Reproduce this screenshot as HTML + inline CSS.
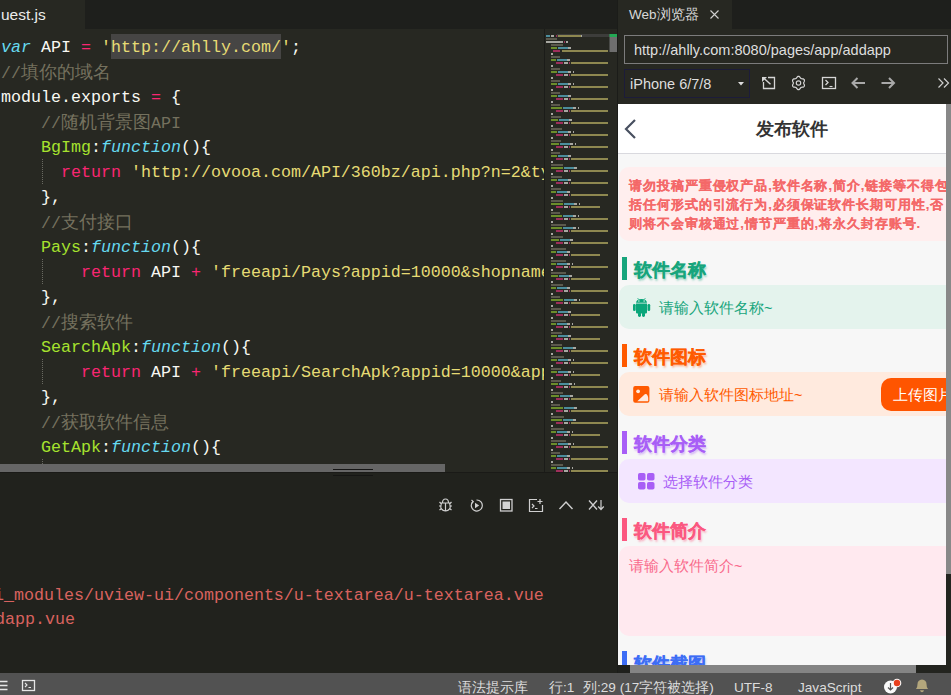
<!DOCTYPE html>
<html><head><meta charset="utf-8">
<style>
*{margin:0;padding:0;box-sizing:border-box}
html,body{width:951px;height:695px;overflow:hidden;background:#272822;font-family:"Liberation Sans",sans-serif}
.abs{position:absolute}
/* editor */
#tabbar{position:absolute;left:0;top:0;width:617px;height:29px;background:#1e1f1c}
#tab{position:absolute;left:0;top:0;width:85px;height:29px;background:#272822;color:#ececec;font-size:15.5px;line-height:29px;padding-left:0}
#code{position:absolute;left:0;top:29px;width:544px;height:435px;background:#272822;overflow:hidden}
#codein{position:absolute;left:0;top:-29px;width:544px;height:500px}
.ln{position:absolute;left:1px;height:25px;line-height:25px;white-space:pre;font-family:"Liberation Mono",monospace;font-size:16.67px;color:#f8f8f2}
.cj{font-style:normal;font-family:"Liberation Sans",sans-serif;font-size:18px;letter-spacing:0}
.w{color:#f8f8f2}.b{color:#66d9ef;font-style:italic}.p{color:#f92672}.y{color:#e6db74}.g{color:#a6e22e}.c{color:#75715e}
.sel{background:#49483e;display:inline-block;height:24px;line-height:25px}
.guide{position:absolute;left:42px;width:1px;height:25px;background:repeating-linear-gradient(#6a6a62 0 1px,transparent 1px 2px)}
#minimap{position:absolute;left:544px;top:29px;width:73px;height:443px;background:#272822;border-left:1px solid #1b1c19}
#hscroll{position:absolute;left:0;top:464px;width:544px;height:8px;background:#272822}
#hthumb{position:absolute;left:0;top:464px;width:445px;height:8px;background:#666}
/* console */
#console{position:absolute;left:0;top:472px;width:617px;height:201px;background:#21221d;border-top:1px solid #1a1a17}
.ct{position:absolute;white-space:pre;font-family:"Liberation Mono",monospace;font-size:16.67px;color:#d9625f}
/* status */
#status{position:absolute;left:0;top:673px;width:951px;height:22px;background:#525252;color:#dcdcdc;font-size:13.6px}
#status span{position:absolute;top:4px;line-height:22px;white-space:nowrap}
/* browser */
#bsep{position:absolute;left:617px;top:0;width:1px;height:673px;background:#1b1c19}
#btabbar{position:absolute;left:618px;top:0;width:333px;height:29px;background:#1e1f1c}
#btab{position:absolute;left:618px;top:0;width:114px;height:29px;background:#272822;color:#d8d8d8;font-size:13.5px;line-height:29px}
#btool{position:absolute;left:618px;top:29px;width:333px;height:75px;background:#272822}
#url{position:absolute;left:624px;top:35px;width:324px;height:29px;border:1px solid #7c7c7c;color:#dedede;font-size:14.5px;line-height:29px;padding-left:9px;white-space:nowrap}
#dev{position:absolute;left:624px;top:69px;width:126px;height:29px;border:1px solid #1c1c3a;color:#dedede;font-size:14.5px;line-height:29px;padding-left:5px}
#web{position:absolute;left:618px;top:104px;width:328px;height:561px;background:#f7f7f7;overflow:hidden}
#vscroll{position:absolute;left:946px;top:104px;width:5px;height:561px;background:#23241f}
#vthumb{position:absolute;left:946px;top:104px;width:5px;height:470px;background:#888}
#hs2{position:absolute;left:618px;top:665px;width:333px;height:8px;background:#23241f}
#hs2t{position:absolute;left:630px;top:665px;width:286px;height:8px;background:#848484}
#hs2l{position:absolute;left:618px;top:665px;width:12px;height:8px;background:#1f201c}
.wabs{position:absolute;white-space:nowrap}
.bar{position:absolute;left:4px;width:5px;height:23px}
.stitle{position:absolute;left:16px;margin-top:1.5px;font-size:18.3px;font-weight:bold;line-height:24px;-webkit-text-stroke:.2px currentColor}
.box{position:absolute;left:1px;width:400px;height:44px;border-radius:10px}
.ph{position:absolute;font-size:14.5px;line-height:20px;white-space:nowrap}
</style></head><body>
<!-- editor -->
<div id="tabbar"></div>
<div id="tab"><span style="position:absolute;left:1px;top:0">uest.js</span></div>
<div id="code"><div id="codein">
<div class="abs" style="left:111px;top:34px;width:170px;height:25px;background:#464544"></div><div class="guide" style="top:159px"></div><div class="guide" style="top:259px"></div><div class="guide" style="top:359px"></div><div class="guide" style="top:459px"></div><div class="ln" style="top:35px"><span class="b">var</span><span class="w"> API </span><span class="p">=</span><span class="w"> </span><span class="y">&#x27;</span><span class="y">http://ahlly.com/</span><span class="y">&#x27;</span><span class="w">;</span></div>
<div class="ln" style="top:60px"><span class="c">//<i class="cj">填你的域名</i></span></div>
<div class="ln" style="top:85px"><span class="w">module.exports </span><span class="p">=</span><span class="w"> {</span></div>
<div class="ln" style="top:110px"><span class="c">    //<i class="cj">随机背景图</i>API</span></div>
<div class="ln" style="top:135px"><span class="w">    </span><span class="g">BgImg</span><span class="w">:</span><span class="b">function</span><span class="w">(){</span></div>
<div class="ln" style="top:160px"><span class="w">      </span><span class="p">return</span><span class="w"> </span><span class="y">&#x27;http://ovooa.com/API/360bz/api.php?n=2&amp;type=json&#x27;</span></div>
<div class="ln" style="top:185px"><span class="w">    },</span></div>
<div class="ln" style="top:210px"><span class="c">    //<i class="cj">支付接口</i></span></div>
<div class="ln" style="top:235px"><span class="w">    </span><span class="g">Pays</span><span class="w">:</span><span class="b">function</span><span class="w">(){</span></div>
<div class="ln" style="top:260px"><span class="w">        </span><span class="p">return</span><span class="w"> API </span><span class="p">+</span><span class="w"> </span><span class="y">&#x27;freeapi/Pays?appid=10000&amp;shopname=xxx&#x27;</span></div>
<div class="ln" style="top:285px"><span class="w">    },</span></div>
<div class="ln" style="top:310px"><span class="c">    //<i class="cj">搜索软件</i></span></div>
<div class="ln" style="top:335px"><span class="w">    </span><span class="g">SearchApk</span><span class="w">:</span><span class="b">function</span><span class="w">(){</span></div>
<div class="ln" style="top:360px"><span class="w">        </span><span class="p">return</span><span class="w"> API </span><span class="p">+</span><span class="w"> </span><span class="y">&#x27;freeapi/SearchApk?appid=10000&amp;apptype=xx&#x27;</span></div>
<div class="ln" style="top:385px"><span class="w">    },</span></div>
<div class="ln" style="top:410px"><span class="c">    //<i class="cj">获取软件信息</i></span></div>
<div class="ln" style="top:435px"><span class="w">    </span><span class="g">GetApk</span><span class="w">:</span><span class="b">function</span><span class="w">(){</span></div>
<div class="ln" style="top:460px"><span class="w">        </span><span class="p">return</span><span class="w"> API </span><span class="p">+</span><span class="w"> </span><span class="y">&#x27;freeapi/GetApk?appid=10000&#x27;</span></div>
</div></div>
<svg class="abs" style="left:0;top:0" width="951" height="695" viewBox="0 0 951 695">
<rect x="544" y="29" width="73" height="443" fill="#272822"/>
<rect x="544" y="29" width="1" height="443" fill="#1b1c19"/>
<rect x="557" y="34" width="52" height="3" fill="#3d3d3b"/><rect x="546" y="35" width="4" height="2" fill="#4c8d9c"/><rect x="551" y="35" width="3" height="2" fill="#a8a8a2"/><rect x="556" y="35" width="1" height="2" fill="#9e2f5b"/><rect x="558" y="35" width="23" height="2" fill="#8e8850"/><rect x="581" y="35" width="1" height="2" fill="#a8a8a2"/><rect x="546" y="38" width="11" height="2" fill="#5c5a4d"/><rect x="546" y="41" width="17" height="2" fill="#a8a8a2"/><rect x="564" y="41" width="1" height="2" fill="#9e2f5b"/><rect x="566" y="41" width="2" height="2" fill="#a8a8a2"/><rect x="551" y="44" width="12" height="2" fill="#5c5a4d"/><rect x="551" y="47" width="6" height="2" fill="#6b8d2b"/><rect x="558" y="47" width="10" height="2" fill="#4c8d9c"/><rect x="568" y="47" width="3" height="2" fill="#a8a8a2"/><rect x="553" y="50" width="7" height="2" fill="#9e2f5b"/><rect x="562" y="50" width="46" height="2" fill="#8e8850"/><rect x="551" y="53" width="2" height="2" fill="#a8a8a2"/><rect x="551" y="56" width="9" height="2" fill="#5c5a4d"/><rect x="551" y="59" width="5" height="2" fill="#6b8d2b"/><rect x="557" y="59" width="10" height="2" fill="#4c8d9c"/><rect x="567" y="59" width="3" height="2" fill="#a8a8a2"/><rect x="556" y="62" width="7" height="2" fill="#9e2f5b"/><rect x="564" y="62" width="4" height="2" fill="#a8a8a2"/><rect x="569" y="62" width="1" height="2" fill="#9e2f5b"/><rect x="571" y="62" width="37" height="2" fill="#8e8850"/><rect x="551" y="65" width="2" height="2" fill="#a8a8a2"/><rect x="551" y="68" width="9" height="2" fill="#5c5a4d"/><rect x="551" y="71" width="6" height="2" fill="#6b8d2b"/><rect x="558" y="71" width="10" height="2" fill="#4c8d9c"/><rect x="568" y="71" width="3" height="2" fill="#a8a8a2"/><rect x="573" y="71" width="1" height="2" fill="#a8a8a2"/><rect x="556" y="74" width="7" height="2" fill="#9e2f5b"/><rect x="564" y="74" width="4" height="2" fill="#a8a8a2"/><rect x="569" y="74" width="1" height="2" fill="#9e2f5b"/><rect x="571" y="74" width="37" height="2" fill="#8e8850"/><rect x="551" y="77" width="2" height="2" fill="#a8a8a2"/><rect x="551" y="80" width="9" height="2" fill="#5c5a4d"/><rect x="551" y="83" width="6" height="2" fill="#6b8d2b"/><rect x="558" y="83" width="10" height="2" fill="#4c8d9c"/><rect x="568" y="83" width="3" height="2" fill="#a8a8a2"/><rect x="573" y="83" width="1" height="2" fill="#a8a8a2"/><rect x="556" y="86" width="7" height="2" fill="#9e2f5b"/><rect x="564" y="86" width="4" height="2" fill="#a8a8a2"/><rect x="569" y="86" width="1" height="2" fill="#9e2f5b"/><rect x="571" y="86" width="37" height="2" fill="#8e8850"/><rect x="551" y="89" width="2" height="2" fill="#a8a8a2"/><rect x="551" y="92" width="9" height="2" fill="#5c5a4d"/><rect x="551" y="95" width="6" height="2" fill="#6b8d2b"/><rect x="558" y="95" width="10" height="2" fill="#4c8d9c"/><rect x="568" y="95" width="3" height="2" fill="#a8a8a2"/><rect x="556" y="98" width="7" height="2" fill="#9e2f5b"/><rect x="564" y="98" width="4" height="2" fill="#a8a8a2"/><rect x="569" y="98" width="1" height="2" fill="#9e2f5b"/><rect x="571" y="98" width="37" height="2" fill="#8e8850"/><rect x="551" y="101" width="2" height="2" fill="#a8a8a2"/><rect x="551" y="104" width="9" height="2" fill="#5c5a4d"/><rect x="551" y="107" width="11" height="2" fill="#6b8d2b"/><rect x="563" y="107" width="10" height="2" fill="#4c8d9c"/><rect x="573" y="107" width="3" height="2" fill="#a8a8a2"/><rect x="578" y="107" width="1" height="2" fill="#a8a8a2"/><rect x="556" y="110" width="7" height="2" fill="#9e2f5b"/><rect x="564" y="110" width="4" height="2" fill="#a8a8a2"/><rect x="569" y="110" width="1" height="2" fill="#9e2f5b"/><rect x="571" y="110" width="37" height="2" fill="#8e8850"/><rect x="551" y="113" width="2" height="2" fill="#a8a8a2"/><rect x="551" y="116" width="10" height="2" fill="#5c5a4d"/><rect x="551" y="119" width="7" height="2" fill="#6b8d2b"/><rect x="559" y="119" width="10" height="2" fill="#4c8d9c"/><rect x="569" y="119" width="3" height="2" fill="#a8a8a2"/><rect x="556" y="122" width="7" height="2" fill="#9e2f5b"/><rect x="564" y="122" width="4" height="2" fill="#a8a8a2"/><rect x="569" y="122" width="1" height="2" fill="#9e2f5b"/><rect x="571" y="122" width="37" height="2" fill="#8e8850"/><rect x="551" y="125" width="2" height="2" fill="#a8a8a2"/><rect x="551" y="128" width="11" height="2" fill="#5c5a4d"/><rect x="551" y="131" width="6" height="2" fill="#6b8d2b"/><rect x="558" y="131" width="10" height="2" fill="#4c8d9c"/><rect x="568" y="131" width="3" height="2" fill="#a8a8a2"/><rect x="573" y="131" width="1" height="2" fill="#a8a8a2"/><rect x="556" y="134" width="7" height="2" fill="#9e2f5b"/><rect x="564" y="134" width="4" height="2" fill="#a8a8a2"/><rect x="569" y="134" width="1" height="2" fill="#9e2f5b"/><rect x="571" y="134" width="37" height="2" fill="#8e8850"/><rect x="551" y="137" width="2" height="2" fill="#a8a8a2"/><rect x="551" y="140" width="10" height="2" fill="#5c5a4d"/><rect x="551" y="143" width="8" height="2" fill="#6b8d2b"/><rect x="560" y="143" width="10" height="2" fill="#4c8d9c"/><rect x="570" y="143" width="3" height="2" fill="#a8a8a2"/><rect x="575" y="143" width="1" height="2" fill="#a8a8a2"/><rect x="556" y="146" width="7" height="2" fill="#9e2f5b"/><rect x="564" y="146" width="4" height="2" fill="#a8a8a2"/><rect x="569" y="146" width="1" height="2" fill="#9e2f5b"/><rect x="571" y="146" width="37" height="2" fill="#8e8850"/><rect x="551" y="149" width="2" height="2" fill="#a8a8a2"/><rect x="551" y="152" width="9" height="2" fill="#5c5a4d"/><rect x="551" y="155" width="6" height="2" fill="#6b8d2b"/><rect x="558" y="155" width="10" height="2" fill="#4c8d9c"/><rect x="568" y="155" width="3" height="2" fill="#a8a8a2"/><rect x="556" y="158" width="7" height="2" fill="#9e2f5b"/><rect x="564" y="158" width="4" height="2" fill="#a8a8a2"/><rect x="569" y="158" width="1" height="2" fill="#9e2f5b"/><rect x="571" y="158" width="37" height="2" fill="#8e8850"/><rect x="551" y="161" width="2" height="2" fill="#a8a8a2"/><rect x="551" y="164" width="12" height="2" fill="#5c5a4d"/><rect x="551" y="167" width="12" height="2" fill="#6b8d2b"/><rect x="564" y="167" width="10" height="2" fill="#4c8d9c"/><rect x="574" y="167" width="3" height="2" fill="#a8a8a2"/><rect x="556" y="170" width="7" height="2" fill="#9e2f5b"/><rect x="564" y="170" width="4" height="2" fill="#a8a8a2"/><rect x="569" y="170" width="1" height="2" fill="#9e2f5b"/><rect x="571" y="170" width="37" height="2" fill="#8e8850"/><rect x="551" y="173" width="2" height="2" fill="#a8a8a2"/><rect x="551" y="176" width="11" height="2" fill="#5c5a4d"/><rect x="551" y="179" width="6" height="2" fill="#6b8d2b"/><rect x="558" y="179" width="10" height="2" fill="#4c8d9c"/><rect x="568" y="179" width="3" height="2" fill="#a8a8a2"/><rect x="556" y="182" width="7" height="2" fill="#9e2f5b"/><rect x="564" y="182" width="4" height="2" fill="#a8a8a2"/><rect x="569" y="182" width="1" height="2" fill="#9e2f5b"/><rect x="571" y="182" width="37" height="2" fill="#8e8850"/><rect x="551" y="185" width="2" height="2" fill="#a8a8a2"/><rect x="551" y="188" width="10" height="2" fill="#5c5a4d"/><rect x="551" y="191" width="5" height="2" fill="#6b8d2b"/><rect x="557" y="191" width="10" height="2" fill="#4c8d9c"/><rect x="567" y="191" width="3" height="2" fill="#a8a8a2"/><rect x="556" y="194" width="7" height="2" fill="#9e2f5b"/><rect x="564" y="194" width="4" height="2" fill="#a8a8a2"/><rect x="569" y="194" width="1" height="2" fill="#9e2f5b"/><rect x="571" y="194" width="37" height="2" fill="#8e8850"/><rect x="551" y="197" width="2" height="2" fill="#a8a8a2"/><rect x="551" y="200" width="12" height="2" fill="#5c5a4d"/><rect x="551" y="203" width="12" height="2" fill="#6b8d2b"/><rect x="564" y="203" width="10" height="2" fill="#4c8d9c"/><rect x="574" y="203" width="3" height="2" fill="#a8a8a2"/><rect x="579" y="203" width="1" height="2" fill="#a8a8a2"/><rect x="556" y="206" width="7" height="2" fill="#9e2f5b"/><rect x="564" y="206" width="4" height="2" fill="#a8a8a2"/><rect x="569" y="206" width="1" height="2" fill="#9e2f5b"/><rect x="571" y="206" width="29" height="2" fill="#8e8850"/><rect x="551" y="209" width="2" height="2" fill="#a8a8a2"/><rect x="551" y="212" width="9" height="2" fill="#5c5a4d"/><rect x="551" y="215" width="11" height="2" fill="#6b8d2b"/><rect x="563" y="215" width="10" height="2" fill="#4c8d9c"/><rect x="573" y="215" width="3" height="2" fill="#a8a8a2"/><rect x="578" y="215" width="1" height="2" fill="#a8a8a2"/><rect x="556" y="218" width="7" height="2" fill="#9e2f5b"/><rect x="564" y="218" width="4" height="2" fill="#a8a8a2"/><rect x="569" y="218" width="1" height="2" fill="#9e2f5b"/><rect x="571" y="218" width="37" height="2" fill="#8e8850"/><rect x="551" y="221" width="2" height="2" fill="#a8a8a2"/><rect x="551" y="224" width="15" height="2" fill="#5c5a4d"/><rect x="551" y="227" width="11" height="2" fill="#6b8d2b"/><rect x="563" y="227" width="10" height="2" fill="#4c8d9c"/><rect x="573" y="227" width="3" height="2" fill="#a8a8a2"/><rect x="578" y="227" width="1" height="2" fill="#a8a8a2"/><rect x="556" y="230" width="7" height="2" fill="#9e2f5b"/><rect x="564" y="230" width="4" height="2" fill="#a8a8a2"/><rect x="569" y="230" width="1" height="2" fill="#9e2f5b"/><rect x="571" y="230" width="37" height="2" fill="#8e8850"/><rect x="551" y="233" width="2" height="2" fill="#a8a8a2"/><rect x="551" y="236" width="12" height="2" fill="#5c5a4d"/><rect x="551" y="239" width="8" height="2" fill="#6b8d2b"/><rect x="560" y="239" width="10" height="2" fill="#4c8d9c"/><rect x="570" y="239" width="3" height="2" fill="#a8a8a2"/><rect x="556" y="242" width="7" height="2" fill="#9e2f5b"/><rect x="564" y="242" width="4" height="2" fill="#a8a8a2"/><rect x="569" y="242" width="1" height="2" fill="#9e2f5b"/><rect x="571" y="242" width="37" height="2" fill="#8e8850"/><rect x="551" y="245" width="2" height="2" fill="#a8a8a2"/><rect x="551" y="248" width="15" height="2" fill="#5c5a4d"/><rect x="551" y="251" width="5" height="2" fill="#6b8d2b"/><rect x="557" y="251" width="10" height="2" fill="#4c8d9c"/><rect x="567" y="251" width="3" height="2" fill="#a8a8a2"/><rect x="556" y="254" width="7" height="2" fill="#9e2f5b"/><rect x="564" y="254" width="4" height="2" fill="#a8a8a2"/><rect x="569" y="254" width="1" height="2" fill="#9e2f5b"/><rect x="571" y="254" width="29" height="2" fill="#8e8850"/><rect x="551" y="257" width="2" height="2" fill="#a8a8a2"/><rect x="551" y="260" width="15" height="2" fill="#5c5a4d"/><rect x="551" y="263" width="5" height="2" fill="#6b8d2b"/><rect x="557" y="263" width="10" height="2" fill="#4c8d9c"/><rect x="567" y="263" width="3" height="2" fill="#a8a8a2"/><rect x="572" y="263" width="1" height="2" fill="#a8a8a2"/><rect x="556" y="266" width="7" height="2" fill="#9e2f5b"/><rect x="564" y="266" width="4" height="2" fill="#a8a8a2"/><rect x="569" y="266" width="1" height="2" fill="#9e2f5b"/><rect x="571" y="266" width="37" height="2" fill="#8e8850"/><rect x="551" y="269" width="2" height="2" fill="#a8a8a2"/><rect x="551" y="272" width="15" height="2" fill="#5c5a4d"/><rect x="551" y="275" width="7" height="2" fill="#6b8d2b"/><rect x="559" y="275" width="10" height="2" fill="#4c8d9c"/><rect x="569" y="275" width="3" height="2" fill="#a8a8a2"/><rect x="556" y="278" width="7" height="2" fill="#9e2f5b"/><rect x="564" y="278" width="4" height="2" fill="#a8a8a2"/><rect x="569" y="278" width="1" height="2" fill="#9e2f5b"/><rect x="571" y="278" width="29" height="2" fill="#8e8850"/><rect x="551" y="281" width="2" height="2" fill="#a8a8a2"/><rect x="551" y="284" width="12" height="2" fill="#5c5a4d"/><rect x="551" y="287" width="5" height="2" fill="#6b8d2b"/><rect x="557" y="287" width="10" height="2" fill="#4c8d9c"/><rect x="567" y="287" width="3" height="2" fill="#a8a8a2"/><rect x="556" y="290" width="7" height="2" fill="#9e2f5b"/><rect x="564" y="290" width="4" height="2" fill="#a8a8a2"/><rect x="569" y="290" width="1" height="2" fill="#9e2f5b"/><rect x="571" y="290" width="37" height="2" fill="#8e8850"/><rect x="551" y="293" width="2" height="2" fill="#a8a8a2"/><rect x="551" y="296" width="9" height="2" fill="#5c5a4d"/><rect x="551" y="299" width="12" height="2" fill="#6b8d2b"/><rect x="564" y="299" width="10" height="2" fill="#4c8d9c"/><rect x="574" y="299" width="3" height="2" fill="#a8a8a2"/><rect x="579" y="299" width="1" height="2" fill="#a8a8a2"/><rect x="556" y="302" width="7" height="2" fill="#9e2f5b"/><rect x="564" y="302" width="4" height="2" fill="#a8a8a2"/><rect x="569" y="302" width="1" height="2" fill="#9e2f5b"/><rect x="571" y="302" width="37" height="2" fill="#8e8850"/><rect x="551" y="305" width="2" height="2" fill="#a8a8a2"/><rect x="551" y="308" width="10" height="2" fill="#5c5a4d"/><rect x="551" y="311" width="6" height="2" fill="#6b8d2b"/><rect x="558" y="311" width="10" height="2" fill="#4c8d9c"/><rect x="568" y="311" width="3" height="2" fill="#a8a8a2"/><rect x="556" y="314" width="7" height="2" fill="#9e2f5b"/><rect x="564" y="314" width="4" height="2" fill="#a8a8a2"/><rect x="569" y="314" width="1" height="2" fill="#9e2f5b"/><rect x="571" y="314" width="29" height="2" fill="#8e8850"/><rect x="551" y="317" width="2" height="2" fill="#a8a8a2"/><rect x="551" y="320" width="15" height="2" fill="#5c5a4d"/><rect x="551" y="323" width="5" height="2" fill="#6b8d2b"/><rect x="557" y="323" width="10" height="2" fill="#4c8d9c"/><rect x="567" y="323" width="3" height="2" fill="#a8a8a2"/><rect x="572" y="323" width="1" height="2" fill="#a8a8a2"/><rect x="556" y="326" width="7" height="2" fill="#9e2f5b"/><rect x="564" y="326" width="4" height="2" fill="#a8a8a2"/><rect x="569" y="326" width="1" height="2" fill="#9e2f5b"/><rect x="571" y="326" width="37" height="2" fill="#8e8850"/><rect x="551" y="329" width="2" height="2" fill="#a8a8a2"/><rect x="551" y="332" width="11" height="2" fill="#5c5a4d"/><rect x="551" y="335" width="6" height="2" fill="#6b8d2b"/><rect x="558" y="335" width="10" height="2" fill="#4c8d9c"/><rect x="568" y="335" width="3" height="2" fill="#a8a8a2"/><rect x="556" y="338" width="7" height="2" fill="#9e2f5b"/><rect x="564" y="338" width="4" height="2" fill="#a8a8a2"/><rect x="569" y="338" width="1" height="2" fill="#9e2f5b"/><rect x="571" y="338" width="29" height="2" fill="#8e8850"/><rect x="551" y="341" width="2" height="2" fill="#a8a8a2"/><rect x="551" y="344" width="11" height="2" fill="#5c5a4d"/><rect x="551" y="347" width="11" height="2" fill="#6b8d2b"/><rect x="563" y="347" width="10" height="2" fill="#4c8d9c"/><rect x="573" y="347" width="3" height="2" fill="#a8a8a2"/><rect x="556" y="350" width="7" height="2" fill="#9e2f5b"/><rect x="564" y="350" width="4" height="2" fill="#a8a8a2"/><rect x="569" y="350" width="1" height="2" fill="#9e2f5b"/><rect x="571" y="350" width="37" height="2" fill="#8e8850"/><rect x="551" y="353" width="2" height="2" fill="#a8a8a2"/><rect x="551" y="356" width="13" height="2" fill="#5c5a4d"/><rect x="551" y="359" width="6" height="2" fill="#6b8d2b"/><rect x="558" y="359" width="10" height="2" fill="#4c8d9c"/><rect x="568" y="359" width="3" height="2" fill="#a8a8a2"/><rect x="573" y="359" width="1" height="2" fill="#a8a8a2"/><rect x="556" y="362" width="7" height="2" fill="#9e2f5b"/><rect x="564" y="362" width="4" height="2" fill="#a8a8a2"/><rect x="569" y="362" width="1" height="2" fill="#9e2f5b"/><rect x="571" y="362" width="37" height="2" fill="#8e8850"/><rect x="551" y="365" width="2" height="2" fill="#a8a8a2"/><rect x="551" y="368" width="10" height="2" fill="#5c5a4d"/><rect x="551" y="371" width="6" height="2" fill="#6b8d2b"/><rect x="558" y="371" width="10" height="2" fill="#4c8d9c"/><rect x="568" y="371" width="3" height="2" fill="#a8a8a2"/><rect x="573" y="371" width="1" height="2" fill="#a8a8a2"/><rect x="556" y="374" width="7" height="2" fill="#9e2f5b"/><rect x="564" y="374" width="4" height="2" fill="#a8a8a2"/><rect x="569" y="374" width="1" height="2" fill="#9e2f5b"/><rect x="571" y="374" width="29" height="2" fill="#8e8850"/><rect x="551" y="377" width="2" height="2" fill="#a8a8a2"/><rect x="551" y="380" width="10" height="2" fill="#5c5a4d"/><rect x="551" y="383" width="7" height="2" fill="#6b8d2b"/><rect x="559" y="383" width="10" height="2" fill="#4c8d9c"/><rect x="569" y="383" width="3" height="2" fill="#a8a8a2"/><rect x="574" y="383" width="1" height="2" fill="#a8a8a2"/><rect x="556" y="386" width="7" height="2" fill="#9e2f5b"/><rect x="564" y="386" width="4" height="2" fill="#a8a8a2"/><rect x="569" y="386" width="1" height="2" fill="#9e2f5b"/><rect x="571" y="386" width="37" height="2" fill="#8e8850"/><rect x="551" y="389" width="2" height="2" fill="#a8a8a2"/><rect x="551" y="392" width="12" height="2" fill="#5c5a4d"/><rect x="551" y="395" width="8" height="2" fill="#6b8d2b"/><rect x="560" y="395" width="10" height="2" fill="#4c8d9c"/><rect x="570" y="395" width="3" height="2" fill="#a8a8a2"/><rect x="556" y="398" width="7" height="2" fill="#9e2f5b"/><rect x="564" y="398" width="4" height="2" fill="#a8a8a2"/><rect x="569" y="398" width="1" height="2" fill="#9e2f5b"/><rect x="571" y="398" width="37" height="2" fill="#8e8850"/><rect x="551" y="401" width="2" height="2" fill="#a8a8a2"/><rect x="551" y="404" width="9" height="2" fill="#5c5a4d"/><rect x="551" y="407" width="12" height="2" fill="#6b8d2b"/><rect x="564" y="407" width="10" height="2" fill="#4c8d9c"/><rect x="574" y="407" width="3" height="2" fill="#a8a8a2"/><rect x="556" y="410" width="7" height="2" fill="#9e2f5b"/><rect x="564" y="410" width="4" height="2" fill="#a8a8a2"/><rect x="569" y="410" width="1" height="2" fill="#9e2f5b"/><rect x="571" y="410" width="37" height="2" fill="#8e8850"/><rect x="551" y="413" width="2" height="2" fill="#a8a8a2"/><rect x="551" y="416" width="13" height="2" fill="#5c5a4d"/><rect x="551" y="419" width="11" height="2" fill="#6b8d2b"/><rect x="563" y="419" width="10" height="2" fill="#4c8d9c"/><rect x="573" y="419" width="3" height="2" fill="#a8a8a2"/><rect x="556" y="422" width="7" height="2" fill="#9e2f5b"/><rect x="564" y="422" width="4" height="2" fill="#a8a8a2"/><rect x="569" y="422" width="1" height="2" fill="#9e2f5b"/><rect x="571" y="422" width="37" height="2" fill="#8e8850"/><rect x="551" y="425" width="2" height="2" fill="#a8a8a2"/><rect x="551" y="428" width="13" height="2" fill="#5c5a4d"/><rect x="551" y="431" width="5" height="2" fill="#6b8d2b"/><rect x="557" y="431" width="10" height="2" fill="#4c8d9c"/><rect x="567" y="431" width="3" height="2" fill="#a8a8a2"/><rect x="572" y="431" width="1" height="2" fill="#a8a8a2"/><rect x="556" y="434" width="7" height="2" fill="#9e2f5b"/><rect x="564" y="434" width="4" height="2" fill="#a8a8a2"/><rect x="569" y="434" width="1" height="2" fill="#9e2f5b"/><rect x="571" y="434" width="29" height="2" fill="#8e8850"/><rect x="551" y="437" width="2" height="2" fill="#a8a8a2"/><rect x="551" y="440" width="15" height="2" fill="#5c5a4d"/><rect x="551" y="443" width="6" height="2" fill="#6b8d2b"/><rect x="558" y="443" width="10" height="2" fill="#4c8d9c"/><rect x="568" y="443" width="3" height="2" fill="#a8a8a2"/><rect x="573" y="443" width="1" height="2" fill="#a8a8a2"/><rect x="556" y="446" width="7" height="2" fill="#9e2f5b"/><rect x="564" y="446" width="4" height="2" fill="#a8a8a2"/><rect x="569" y="446" width="1" height="2" fill="#9e2f5b"/><rect x="571" y="446" width="37" height="2" fill="#8e8850"/><rect x="551" y="449" width="2" height="2" fill="#a8a8a2"/><rect x="551" y="452" width="9" height="2" fill="#5c5a4d"/><rect x="551" y="455" width="5" height="2" fill="#6b8d2b"/><rect x="557" y="455" width="10" height="2" fill="#4c8d9c"/><rect x="567" y="455" width="3" height="2" fill="#a8a8a2"/><rect x="556" y="458" width="7" height="2" fill="#9e2f5b"/><rect x="564" y="458" width="4" height="2" fill="#a8a8a2"/><rect x="569" y="458" width="1" height="2" fill="#9e2f5b"/><rect x="571" y="458" width="37" height="2" fill="#8e8850"/><rect x="551" y="461" width="2" height="2" fill="#a8a8a2"/><rect x="551" y="464" width="12" height="2" fill="#5c5a4d"/><rect x="551" y="467" width="5" height="2" fill="#6b8d2b"/><rect x="557" y="467" width="10" height="2" fill="#4c8d9c"/><rect x="567" y="467" width="3" height="2" fill="#a8a8a2"/><rect x="572" y="467" width="1" height="2" fill="#a8a8a2"/><rect x="556" y="470" width="7" height="2" fill="#9e2f5b"/><rect x="564" y="470" width="4" height="2" fill="#a8a8a2"/><rect x="569" y="470" width="1" height="2" fill="#9e2f5b"/><rect x="571" y="470" width="37" height="2" fill="#8e8850"/><rect x="551" y="473" width="2" height="2" fill="#a8a8a2"/>
<rect x="609.5" y="34" width="7.5" height="18" fill="#6e6e6e"/>
<rect x="609.5" y="34" width="7.5" height="3" fill="#22a854"/>
</svg>
<div id="hthumb"></div>
<div id="console">
  <div class="ct" style="left:-6px;line-height:23.5px;top:111px">i_modules/uview-ui/components/u-textarea/u-textarea.vue</div>
  <div class="ct" style="left:-5px;top:134.5px;line-height:23.5px">dapp.vue</div>
</div>
<div class="abs" style="left:333px;top:469px;width:40px;height:1px;background:#151515"></div>
<div class="abs" style="left:333px;top:475px;width:40px;height:1px;background:#161614"></div>
<!-- console icons -->
<svg class="abs" style="left:0;top:0" width="617" height="673" viewBox="0 0 617 673" fill="none" stroke="#cfcfcf" stroke-width="1.2">
  <!-- bug -->
  <g transform="translate(439,498)">
    <path d="M3.5 5 Q3.5 1 6.5 1 Q9.5 1 9.5 5 M2.5 5 H10.5 Q11.5 8 11 10 Q9.5 13 6.5 13 Q3.5 13 2 10 Q1.5 8 2.5 5 Z M6.5 5 V13 M0.5 4 L2.5 6 M12.5 4 L10.5 6 M0 8 H2 M11 8 H13 M0.5 12 L2.5 10.5 M12.5 12 L10.5 10.5"/>
  </g>
  <!-- replay -->
  <g transform="translate(470,499)">
    <path d="M3 2.5 A5.5 5.5 0 1 0 6.5 1"/>
    <path d="M1.5 1 L3.2 2.5 L1.8 4.3"/>
    <path d="M5 3.8 L9.2 6.5 L5 9.2 Z" fill="#cfcfcf" stroke="none"/>
  </g>
  <!-- stop -->
  <rect x="500.5" y="499.5" width="11.5" height="11.5" stroke-width="1.3"/>
  <rect x="502.5" y="501.5" width="7.5" height="7.5" fill="#d4d4d4" stroke="none"/>
  <!-- terminal+ -->
  <g transform="translate(529,499)">
    <path d="M8 0.5 H0.5 V12.5 H13.5 V6"/>
    <path d="M3 5 L5 7 L3 9 M6 9.5 H8.5"/>
    <path d="M11 0 V5 M8.5 2.5 H13.5"/>
  </g>
  <!-- chevron -->
  <path d="M559.5 509 L566 502 L572.5 509" stroke-width="1.4"/>
  <!-- X down -->
  <path d="M589 500.5 L597 509.5 M597 500.5 L589 509.5" stroke-width="1.3"/>
  <path d="M601 500 V509.5 M598.2 506.5 L601 509.5 L603.8 506.5" stroke-width="1.2"/>
</svg>

<!-- status -->
<div id="status">
  <svg class="abs" style="left:0;top:0" width="40" height="22" fill="none" stroke="#e6e6e6" stroke-width="1.3">
    <path d="M0 8.5 H7.5 M0 12.5 H7.5 M0 16.5 H7.5"/>
    <rect x="22.5" y="7.5" width="12" height="10"/>
    <path d="M25 10 L27 12 L25 14 M28.5 14.5 H31" stroke-width="1.1"/>
  </svg>
  <span style="left:458px">语法提示库</span>
  <span style="left:549px">行:1</span>
  <span style="left:583px">列:29 (17字符被选择)</span>
  <span style="left:734px">UTF-8</span>
  <span style="left:798px">JavaScript</span>
  <svg class="abs" style="left:880px;top:0" width="71" height="22">
    <circle cx="10.5" cy="14" r="6.5" fill="#fafafa"/>
    <path d="M10.5 10 V17 M8 14.5 L10.5 17 L13 14.5" stroke="#555" stroke-width="1.2" fill="none"/>
    <circle cx="17" cy="10" r="4.3" fill="#fafafa"/>
    <circle cx="17" cy="10" r="3.2" fill="#e8401e"/>
    <path d="M36 16 Q37.5 14.5 37.5 11 Q37.5 7 42 6.5 Q46.5 7 46.5 11 Q46.5 14.5 48 16 Z" fill="#b3a67c"/>
    <path d="M40 17.3 H44 Q43.5 19.3 42 19.3 Q40.5 19.3 40 17.3 Z" fill="#b3a67c"/>
  </svg>
</div>

<!-- browser -->
<div id="bsep"></div>
<div id="btabbar"></div>
<div id="btab"><span style="position:absolute;left:11px;top:0">Web浏览器</span><svg style="position:absolute;left:92px;top:10px" width="9" height="9"><path d="M0.5 0.5 L8.5 8.5 M8.5 0.5 L0.5 8.5" stroke="#d0d0d0" stroke-width="1.1"/></svg></div>
<div id="btool"></div>
<div id="url">http://ahlly.com:8080/pages/app/addapp</div>
<div id="dev">iPhone 6/7/8<svg class="abs" style="left:113px;top:12px" width="7" height="4"><path d="M0 0 H6 L3 3.5 Z" fill="#dcdcdc"/></svg></div>
<svg class="abs" style="left:750px;top:71px" width="201" height="30" fill="none" stroke="#d6d6d6" stroke-width="1.3">
  <path d="M18 6.5 H24.5 V17.5 H13.5 V11"/>
  <path d="M12.8 6.2 L20.5 13.2" stroke-width="1.4"/>
  <path d="M12 6 H17 L12 11 Z" fill="#d6d6d6" stroke="none"/>
  <g transform="translate(48.5,12)"><path d="M5.15 0.00 L5.20 0.34 L5.32 0.70 L5.51 1.10 L5.70 1.53 L5.86 1.99 L5.94 2.46 L5.91 2.92 L5.76 3.32 L5.48 3.66 L5.10 3.91 L4.65 4.08 L4.17 4.17 L3.70 4.22 L3.27 4.26 L2.89 4.33 L2.58 4.46 L2.30 4.67 L2.05 4.96 L1.80 5.32 L1.53 5.70 L1.21 6.07 L0.84 6.38 L0.43 6.58 L0.00 6.65 L-0.43 6.58 L-0.84 6.38 L-1.21 6.07 L-1.53 5.70 L-1.80 5.32 L-2.05 4.96 L-2.30 4.67 L-2.57 4.46 L-2.89 4.33 L-3.27 4.26 L-3.70 4.22 L-4.17 4.17 L-4.65 4.08 L-5.10 3.91 L-5.48 3.66 L-5.76 3.32 L-5.91 2.92 L-5.94 2.46 L-5.86 1.99 L-5.70 1.53 L-5.51 1.10 L-5.32 0.70 L-5.20 0.34 L-5.15 0.00 L-5.20 -0.34 L-5.32 -0.70 L-5.51 -1.10 L-5.70 -1.53 L-5.86 -1.99 L-5.94 -2.46 L-5.91 -2.92 L-5.76 -3.32 L-5.48 -3.66 L-5.10 -3.91 L-4.65 -4.08 L-4.17 -4.17 L-3.70 -4.22 L-3.27 -4.26 L-2.89 -4.33 L-2.58 -4.46 L-2.30 -4.67 L-2.05 -4.96 L-1.80 -5.32 L-1.53 -5.70 L-1.21 -6.07 L-0.84 -6.38 L-0.43 -6.58 L-0.00 -6.65 L0.43 -6.58 L0.84 -6.38 L1.21 -6.07 L1.53 -5.70 L1.80 -5.32 L2.05 -4.96 L2.30 -4.67 L2.58 -4.46 L2.89 -4.33 L3.27 -4.26 L3.70 -4.22 L4.17 -4.17 L4.65 -4.08 L5.10 -3.91 L5.48 -3.66 L5.76 -3.33 L5.91 -2.92 L5.94 -2.46 L5.86 -1.99 L5.70 -1.53 L5.51 -1.10 L5.32 -0.70 L5.20 -0.34 Z" stroke-width="1.2"/><circle cx="0" cy="0" r="2.2" stroke-width="1.2"/></g>
  <rect x="72.5" y="6.5" width="13" height="11"/>
  <path d="M75.5 9 L78 11.5 L75.5 14"/><path d="M79.5 15.5 H82.5" stroke-width="1.1"/>
  <path d="M102.5 12 H115 M107.5 7 L102.5 12 L107.5 17" stroke="#a9a9a9" stroke-width="2"/>
  <path d="M131.5 12 H144 M139 7 L144 12 L139 17" stroke="#a9a9a9" stroke-width="2"/>
  <path d="M188.5 7.5 L193 12 L188.5 16.5 M194 7.5 L198.5 12 L194 16.5" stroke="#cfcfcf" stroke-width="1.2"/>
</svg>

<div id="web">
  <div class="wabs" style="left:0;top:0;width:400px;height:50px;background:#fff;border-bottom:1px solid #d9d9de"></div>
  <svg class="abs" style="left:6px;top:14px" width="14" height="22"><path d="M11 2 L2 11 L11 20" stroke="#485060" stroke-width="2.2" fill="none"/></svg>
  <div class="wabs" style="left:138px;top:12px;font-size:18px;font-weight:bold;color:#333;line-height:26px">发布软件</div>

  <div class="wabs" style="left:1px;top:63px;width:400px;height:74px;background:#ffeeee;border-radius:10px"></div>
  <div class="wabs" style="left:11px;top:73px;font-size:13px;letter-spacing:.92px;font-weight:bold;color:#f46868;line-height:18.8px;-webkit-text-stroke:.15px currentColor">请勿投稿严重侵权产品,软件名称,简介,链接等不得包<br>括任何形式的引流行为,必须保证软件长期可用性,否<br>则将不会审核通过,情节严重的,将永久封存账号.</div>

  <!-- name -->
  <div class="bar" style="top:153px;background:#17a57c"></div>
  <div class="stitle" style="top:152px;color:#17a57c;text-shadow:1px 1.5px 2px rgba(23,165,124,.45)">软件名称</div>
  <div class="box" style="top:181px;background:#e4f3ed"></div>
  <svg class="abs" style="left:15px;top:194px" width="18" height="20" fill="#0aa67a">
    <path d="M3 5.4 H14 V14.6 Q14 15.4 13.2 15.4 H3.8 Q3 15.4 3 14.6 Z"/>
    <path d="M3 4.7 Q3.3 1 8.5 0.9 Q13.7 1 14 4.7 Z"/>
    <rect x="0" y="5.9" width="2.7" height="7.2" rx="1.3"/><rect x="14.5" y="5.9" width="2.7" height="7.2" rx="1.3"/>
    <rect x="5" y="14" width="3" height="5" rx="1.4"/><rect x="9" y="14" width="3" height="5" rx="1.4"/>
    <circle cx="5.9" cy="3" r=".75" fill="#e4f3ed"/><circle cx="11.1" cy="3" r=".75" fill="#e4f3ed"/>
    <path d="M4.6 0 L5.6 1.5 M12.4 0 L11.4 1.5" stroke="#0aa67a" stroke-width=".7"/>
  </svg>
  <div class="ph" style="left:41px;top:194px;color:#17a57c">请输入软件名称~</div>

  <!-- icon -->
  <div class="bar" style="top:240px;background:#ff5a00"></div>
  <div class="stitle" style="top:239px;color:#ff5a00;text-shadow:1px 1.5px 2px rgba(255,90,0,.45)">软件图标</div>
  <div class="box" style="top:268px;background:#ffeade"></div>
  <svg class="abs" style="left:15px;top:386px;margin-top:-104px" width="18" height="18">
    <rect x="0.2" y="0" width="16.2" height="16.7" rx="2" fill="#ff5a00"/>
    <circle cx="5.1" cy="5.3" r="1.9" fill="#ffeade"/>
    <path d="M4.3 15.3 L11.8 8.3 Q13.3 7.1 14.4 9.3 Q15.2 10.8 15.2 12 V15.3 Z" fill="#ffeade"/>
  </svg>
  <div class="ph" style="left:41px;top:281px;color:#ff5a00">请输入软件图标地址~</div>
  <div class="wabs" style="left:263px;top:274px;width:120px;height:33px;background:#ff5500;border-radius:10px;color:#fff;font-size:15px;line-height:33px;padding-left:12px">上传图片</div>

  <!-- category -->
  <div class="bar" style="top:327px;background:#a85ef6"></div>
  <div class="stitle" style="top:326px;color:#a85ef6;text-shadow:1px 1.5px 2px rgba(168,94,246,.45)">软件分类</div>
  <div class="box" style="top:355px;background:#f3e6ff"></div>
  <svg class="abs" style="left:20px;top:369px" width="17" height="17" fill="#a85ef6">
    <rect x="0" y="0" width="7.5" height="7.5" rx="1.8"/><rect x="9" y="0" width="7.5" height="7.5" rx="1.8"/>
    <rect x="0" y="9" width="7.5" height="7.5" rx="1.8"/><rect x="9" y="9" width="7.5" height="7.5" rx="1.8"/>
  </svg>
  <div class="ph" style="left:45px;top:368px;color:#a85ef6">选择软件分类</div>

  <!-- intro -->
  <div class="bar" style="top:414px;background:#fb5880"></div>
  <div class="stitle" style="top:413px;color:#fb5880;text-shadow:1px 1.5px 2px rgba(251,88,128,.45)">软件简介</div>
  <div class="box" style="top:442px;height:90px;background:#ffe9ef"></div>
  <div class="ph" style="left:11px;top:452px;color:#f96b8c">请输入软件简介~</div>

  <!-- screenshot -->
  <div class="bar" style="top:547px;background:#3d6df5"></div>
  <div class="stitle" style="top:546px;color:#3d6df5;text-shadow:1px 1.5px 2px rgba(61,109,245,.45)">软件截图</div>
</div>
<div id="vscroll"></div>
<div id="vthumb"></div>
<div id="hs2"></div>
<div id="hs2l"></div>
<div id="hs2t"></div>
</body></html>
